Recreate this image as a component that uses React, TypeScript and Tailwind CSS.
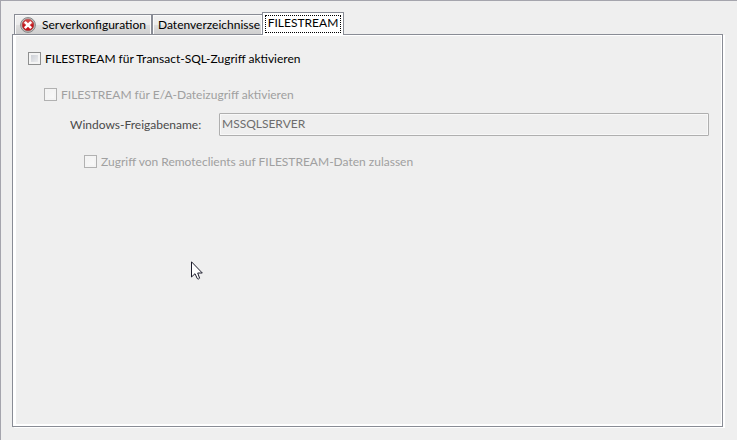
import { useState } from "react";
import clsx from "clsx";

const TABS = [
  { id: "server", label: "Serverkonfiguration", error: true },
  { id: "data", label: "Datenverzeichnisse", error: false },
  { id: "filestream", label: "FILESTREAM", error: false },
];

function ErrorIcon() {
  return (
    <svg width="16" height="16" viewBox="0 0 16 16" className="shrink-0" aria-hidden="true">
      <circle cx="8" cy="8" r="7.4" fill="#c4c4c4" stroke="#858585" />
      <circle cx="8" cy="8" r="5.8" fill="#c4161c" stroke="#9c3a3a" strokeWidth="0.6" />
      <path d="M2.8 7a5.2 5.2 0 0 1 10.4 0Q8 9 2.8 7Z" fill="#e0706c" opacity="0.45" />
      <path d="M4.8 4.8l6.4 6.4M11.2 4.8l-6.4 6.4" stroke="#fff" strokeWidth="2.6" />
    </svg>
  );
}

function MousePointer() {
  return (
    <svg width="12" height="19" viewBox="0 0 12 19" className="absolute left-[190px] top-[260px]" aria-hidden="true">
      <path
        d="M0.5 0.8V16L4 12.7L6.3 17.6Q7.5 18.6 8.6 17.2L6.7 12H11.3Z"
        fill="#fff"
        stroke="#1c1c2c"
      />
    </svg>
  );
}

interface CheckProps {
  id: string;
  label: string;
  disabled?: boolean;
  checked: boolean;
  onChange: (v: boolean) => void;
}

function Check({ id, label, disabled, checked, onChange }: CheckProps) {
  return (
    <div className="flex h-[21px] items-center gap-1">
      <input
        id={id}
        type="checkbox"
        checked={checked}
        disabled={disabled}
        onChange={e => onChange(e.target.checked)}
        className="size-[13px] shrink-0 appearance-none border border-[#8e8f8f] bg-linear-to-br from-[#c4c8d0] to-[#f4f4f4] shadow-[inset_0_0_0_2px_#f4f4f4] checked:from-[#4b6097] checked:to-[#4b6097] disabled:border-[#b1b1b1] disabled:from-[#f0f0f0] disabled:to-[#fbfbfb]"
      />
      <label htmlFor={id} className={clsx("whitespace-nowrap", disabled ? "text-[#a0a0a0]" : "text-black")}>
        {label}
      </label>
    </div>
  );
}

export default function App() {
  const [active, setActive] = useState("filestream");
  const [tsql, setTsql] = useState(false);
  const [fileIo, setFileIo] = useState(false);
  const [remote, setRemote] = useState(false);
  const [share, setShare] = useState("MSSQLSERVER");

  return (
    <div className="relative flex min-h-screen flex-col border-l border-t border-[#a5a5ad] bg-[#efefef] pb-[13px] pl-[11px] pr-[14px] pt-[11px] font-['Lato',sans-serif] text-[12px] leading-4 text-black">
      {/* Tabs */}
      <div role="tablist" className="relative z-10 flex h-[22px] items-end pl-[2px]">
        {TABS.map(t => (
          <button
            key={t.id}
            role="tab"
            aria-selected={active === t.id}
            onClick={() => setActive(t.id)}
            className={clsx(
              "flex items-center whitespace-nowrap border-[#898c95]",
              active === t.id
                ? "-mb-px h-[23px] border-x border-t bg-white p-[2px]"
                : "h-5 gap-[6px] border-l border-t bg-[linear-gradient(#f2f2f2,#ebebeb_50%,#dddddd_55%,#cfcfcf)] pl-[5px] shadow-[inset_1px_1px_0_#fbfbfb,inset_-1px_0_0_#fbfbfb]",
              t.id === "server" && "w-[138px] border-r",
              t.id === "data" && "w-[110px]",
              t.id === "filestream" && "w-[82px]",
            )}
          >
            {t.error && <ErrorIcon />}
            {active === t.id ? (
              <span className="flex h-[18px] w-full items-center justify-center border border-dotted border-black pb-[2px]">
                {t.label}
              </span>
            ) : (
              <span>{t.label}</span>
            )}
          </button>
        ))}
      </div>

      {/* Page */}
      <div
        role="tabpanel"
        className="flex flex-1 flex-col border border-[#898c95] pb-4 pl-[15px] pr-[13px] pt-[13px] shadow-[inset_3px_1px_0_#fff,inset_-1px_-2px_0_#fff,2px_1px_0_#fff]"
      >
        <Check
          id="tsql"
          label="FILESTREAM für Transact-SQL-Zugriff aktivieren"
          checked={tsql}
          onChange={setTsql}
        />
        <div className="flex flex-col pl-4 pt-[15px]">
          <Check
            id="file-io"
            label="FILESTREAM für E/A-Dateizugriff aktivieren"
            disabled={!tsql}
            checked={fileIo}
            onChange={setFileIo}
          />
          <div className="flex items-center pl-[26px] pt-2">
            <label htmlFor="share" className="w-[149px] shrink-0 whitespace-nowrap text-[#4a4a4a]">
              Windows-Freigabename:
            </label>
            <input
              id="share"
              type="text"
              value={share}
              disabled={!fileIo}
              onChange={e => setShare(e.target.value)}
              className="h-[23px] min-w-0 flex-1 rounded-[1px] border border-[#afafaf] bg-[#efefef] px-[2px] pb-[2px] text-[#6d6d6d] shadow-[inset_0_0_0_1px_#f8f8f8]"
            />
          </div>
          <div className="pl-10 pt-[15px]">
            <Check
              id="remote"
              label="Zugriff von Remoteclients auf FILESTREAM-Daten zulassen"
              disabled={!fileIo}
              checked={remote}
              onChange={setRemote}
            />
          </div>
        </div>
      </div>

      <MousePointer />
    </div>
  );
}
